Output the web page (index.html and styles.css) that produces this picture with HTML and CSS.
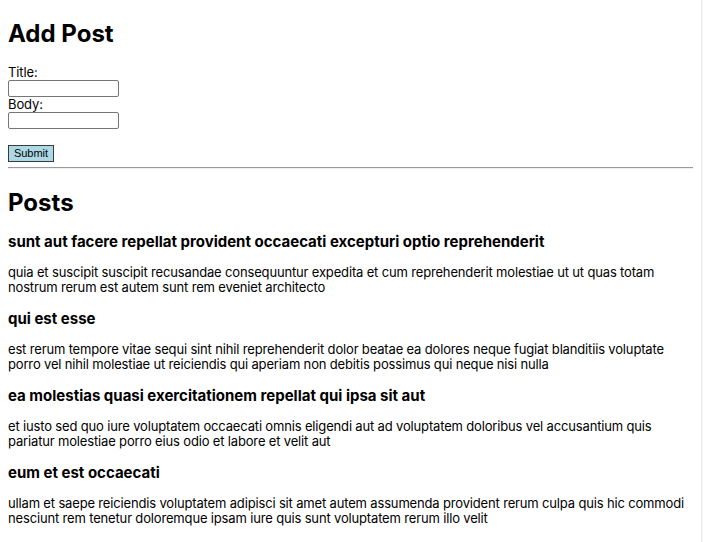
FILE: index.html
```html
<!DOCTYPE html>
<html lang="en">
<head>
<meta charset="utf-8">
<title>Posts</title>
<link rel="stylesheet" href="styles.css">
</head>
<body>
<div class="app">
  <h1 class="heading">Add Post</h1>
  <form class="post-form">
    <label class="field-label" for="title">Title:</label>
    <input class="field-input" id="title" type="text">
    <label class="field-label" for="body">Body:</label>
    <input class="field-input" id="body" type="text">
    <div class="actions">
      <button class="submit-btn" type="button">Submit</button>
    </div>
  </form>
  <hr class="divider">
  <h1 class="heading posts-heading">Posts</h1>
  <div class="post">
    <h3 class="post-title">sunt aut facere repellat provident occaecati excepturi optio reprehenderit</h3>
    <p class="post-body">quia et suscipit suscipit recusandae consequuntur expedita et cum reprehenderit molestiae ut ut quas totam nostrum rerum est autem sunt rem eveniet architecto</p>
  </div>
  <div class="post">
    <h3 class="post-title">qui est esse</h3>
    <p class="post-body">est rerum tempore vitae sequi sint nihil reprehenderit dolor beatae ea dolores neque fugiat blanditiis voluptate porro vel nihil molestiae ut reiciendis qui aperiam non debitis possimus qui neque nisi nulla</p>
  </div>
  <div class="post">
    <h3 class="post-title">ea molestias quasi exercitationem repellat qui ipsa sit aut</h3>
    <p class="post-body">et iusto sed quo iure voluptatem occaecati omnis eligendi aut ad voluptatem doloribus vel accusantium quis pariatur molestiae porro eius odio et labore et velit aut</p>
  </div>
  <div class="post">
    <h3 class="post-title">eum et est occaecati</h3>
    <p class="post-body">ullam et saepe reiciendis voluptatem adipisci sit amet autem assumenda provident rerum culpa quis hic commodi nesciunt rem tenetur doloremque ipsam iure quis sunt voluptatem rerum illo velit</p>
  </div>
</div>
</body>
</html>
```

FILE: styles.css
```css
html {
  background: #ffffff;
}
body {
  margin: 0 10px 0 8px;
  font-family: Inter, "Noto Sans", sans-serif;
  font-size: 13px;
  color: #000;
}
body::after {
  content: "";
  position: fixed;
  top: 0;
  right: 0;
  bottom: 0;
  width: 1px;
  border-left: 1px solid #e6e6e6;
  background: #fbfbfb;
}
.app {
  display: flow-root;
}
.heading {
  font-size: 24px;
  font-weight: 700;
  line-height: 29px;
  margin: 19px 0 17px;
}
.posts-heading {
  margin-top: 19px;
  margin-bottom: 16px;
}
.post-form {
  display: flex;
  flex-direction: column;
  align-items: flex-start;
}
.field-label {
  line-height: 15px;
  height: 15px;
  letter-spacing: -0.1px;
}
.field-input {
  box-sizing: border-box;
  width: 111px;
  height: 17px;
  margin: 0;
  padding: 1px 2px;
  border: 1px solid #767676;
  border-radius: 2px;
  font: 11px Inter, sans-serif;
}
.actions {
  margin-top: 15px;
}
.submit-btn {
  box-sizing: border-box;
  width: 46px;
  height: 17px;
  padding: 0;
  margin: 0;
  background: #add8e6;
  border: 1px solid #3a3a3a;
  border-radius: 0;
  font: 11px "Liberation Sans", Arial, sans-serif;
  color: #000;
}
.divider {
  margin: 5px 0 0;
  border: 0;
  border-top: 1px solid #9a9a9a;
  border-bottom: 1px solid #eeeeee;
  height: 0;
}
.post-title {
  font-size: 15px;
  font-weight: 700;
  line-height: 18px;
  margin: 0;
}
.post-body {
  line-height: 15px;
  margin: 14px 0 15px;
  letter-spacing: -0.16px;
}
```
